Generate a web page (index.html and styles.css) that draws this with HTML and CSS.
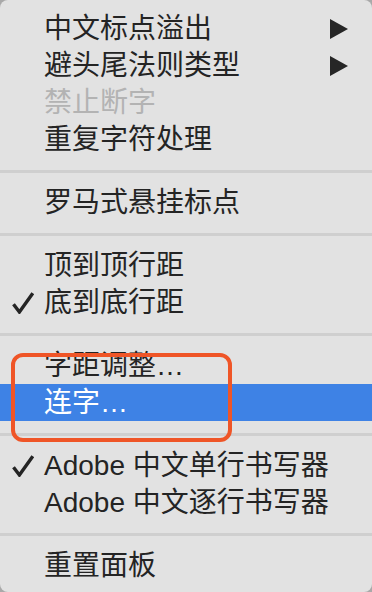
FILE: index.html
```html
<!DOCTYPE html>
<html lang="zh-CN">
<head>
<meta charset="utf-8">
<title>菜单</title>
<link rel="stylesheet" href="styles.css">
</head>
<body>
<div class="menu">
  <div class="item"><span class="mark"></span><span class="label">中文标点溢出</span><svg class="arrow" viewBox="0 0 18 20"><polygon points="0,0 18,10 0,20"/></svg></div>
  <div class="item"><span class="mark"></span><span class="label">避头尾法则类型</span><svg class="arrow" viewBox="0 0 18 20"><polygon points="0,0 18,10 0,20"/></svg></div>
  <div class="item disabled"><span class="mark"></span><span class="label">禁止断字</span></div>
  <div class="item"><span class="mark"></span><span class="label">重复字符处理</span></div>
  <div class="sep"></div>
  <div class="item"><span class="mark"></span><span class="label">罗马式悬挂标点</span></div>
  <div class="sep"></div>
  <div class="item"><span class="mark"></span><span class="label">顶到顶行距</span></div>
  <div class="item"><span class="mark"><svg class="check" viewBox="0 0 22 22"><path d="M1.5 12.2 L7.4 20 L20.8 1.2"/></svg></span><span class="label">底到底行距</span></div>
  <div class="sep"></div>
  <div class="item"><span class="mark"></span><span class="label">字距调整…</span></div>
  <div class="item selected"><span class="mark"></span><span class="label">连字…</span></div>
  <div class="sep"></div>
  <div class="item"><span class="mark"><svg class="check" viewBox="0 0 22 22"><path d="M1.5 12.2 L7.4 20 L20.8 1.2"/></svg></span><span class="label">Adobe 中文单行书写器</span></div>
  <div class="item"><span class="mark"></span><span class="label">Adobe 中文逐行书写器</span></div>
  <div class="sep"></div>
  <div class="item"><span class="mark"></span><span class="label">重置面板</span></div>
  <div class="callout"></div>
</div>
</body>
</html>
```

FILE: styles.css
```css
html, body {
  margin: 0;
  padding: 0;
}
body {
  width: 372px;
  height: 592px;
  background: #a9a9a9;
  overflow: hidden;
}
.menu {
  position: relative;
  width: 372px;
  height: 592px;
  box-sizing: border-box;
  padding-top: 10px;
  background: #e2e2e2;
  border-radius: 8px;
  font-family: "Liberation Sans", "Noto Sans CJK SC", sans-serif;
  font-size: 28px;
  color: #242424;
}
.item {
  display: flex;
  align-items: center;
  height: 37px;
  padding-left: 12px;
  line-height: 37px;
  white-space: nowrap;
}
.mark {
  display: flex;
  align-items: center;
  width: 32px;
  height: 37px;
  flex: none;
}
.label {
  margin-top: -1px;
}
.check {
  width: 22px;
  height: 22px;
  fill: none;
  stroke: #242424;
  stroke-width: 3.4;
  stroke-linecap: butt;
  stroke-linejoin: miter;
}
.arrow {
  width: 18px;
  height: 20px;
  margin-left: auto;
  margin-right: 24px;
  fill: #262626;
}
.disabled {
  color: #b3b3b3;
}
.selected {
  background: #3e82e5;
  color: #ffffff;
}
.sep {
  height: 26px;
  display: flex;
  align-items: center;
}
.sep::before {
  content: "";
  display: block;
  width: 100%;
  height: 3px;
  background: #cfcfcf;
}
.callout {
  position: absolute;
  left: 11px;
  top: 353px;
  width: 221px;
  height: 89px;
  box-sizing: border-box;
  border: 4px solid #ef5527;
  border-radius: 12px;
}
```
